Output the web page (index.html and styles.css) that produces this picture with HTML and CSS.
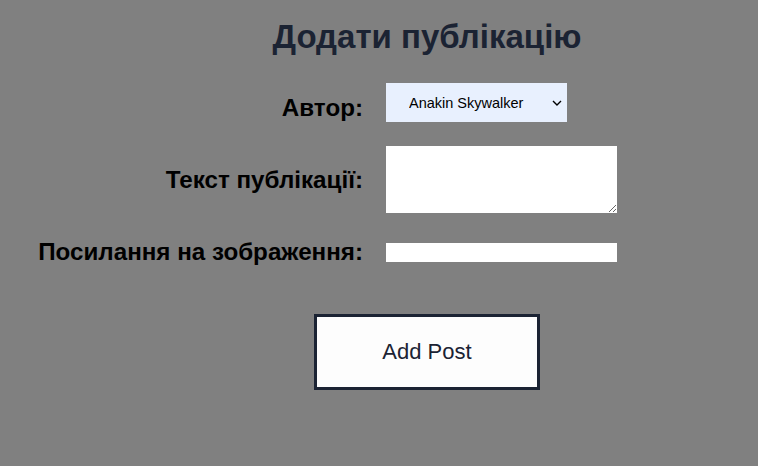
FILE: index.html
```html
<!DOCTYPE html>
<html lang="uk">
<head>
<meta charset="utf-8">
<title>Додати публікацію</title>
<link rel="stylesheet" href="styles.css">
</head>
<body>
<main class="page">
  <h1 class="title">Додати публікацію</h1>
  <form class="post-form">
    <div class="row row-author">
      <label class="label" for="author">Автор:</label>
      <div class="select-wrap">
        <select id="author" class="select">
          <option>Anakin Skywalker</option>
          <option>Luke Skywalker</option>
        </select>
        <svg class="chevron" width="10" height="6" viewBox="0 0 10 6" aria-hidden="true"><polyline points="1,1 5,5 9,1" fill="none" stroke="#000" stroke-width="1.4"/></svg>
      </div>
    </div>
    <div class="row row-text">
      <label class="label" for="text">Текст публікації:</label>
      <textarea id="text" class="textarea"></textarea>
    </div>
    <div class="row row-image">
      <label class="label" for="image">Посилання на зображення:</label>
      <input id="image" class="input" type="text">
    </div>
    <div class="actions">
      <button type="button" class="btn">Add Post</button>
    </div>
  </form>
</main>
</body>
</html>
```
FILE: styles.css
```css
html, body {
  margin: 0;
  padding: 0;
  background: #808080;
  font-family: "Liberation Sans", Arial, sans-serif;
}
.page {
  width: 758px;
  height: 466px;
  padding-top: 1px;
  box-sizing: border-box;
}
.title {
  margin: 16px 0 0 0;
  padding-left: 96px;
  text-align: center;
  font-size: 33px;
  font-weight: bold;
  color: #1b2333;
  line-height: 40px;
}
.post-form {
  display: flex;
  flex-direction: column;
  margin-top: 26px;
}
.row {
  display: grid;
  grid-template-columns: 355px 231px;
  column-gap: 23px;
  align-items: center;
  padding-left: 8px;
}
.row-text { margin-top: 24px; }
.row-image { margin-top: 26px; }
.label {
  text-align: right;
  font-size: 24.2px;
  font-weight: bold;
  color: #000;
  line-height: 26px;
}
.row-author .label { position: relative; top: 5px; }
.select-wrap {
  position: relative;
  width: 181px;
  height: 39px;
}
.select {
  -webkit-appearance: none;
  appearance: none;
  width: 181px;
  height: 39px;
  border: none;
  background: #e8f0fe;
  font-family: "Liberation Sans", Arial, sans-serif;
  font-size: 14.5px;
  color: #000;
  padding: 0 24px 0 23px;
  border-radius: 0;
  outline: none;
  display: block;
  margin: 0;
}
.chevron {
  position: absolute;
  left: 166px;
  top: 17px;
  pointer-events: none;
}
.textarea {
  width: 231px;
  height: 67px;
  border: none;
  background: #fff;
  padding: 2px;
  box-sizing: border-box;
  display: block;
  margin: 0;
  border-radius: 0;
}
.input {
  width: 231px;
  height: 19px;
  border: none;
  background: #fff;
  padding: 0 2px;
  box-sizing: border-box;
  display: block;
  margin: 0;
  border-radius: 0;
}
.actions {
  display: flex;
  padding-left: 96px;
  justify-content: center;
  margin-top: 49px;
}
.btn {
  width: 226px;
  height: 76px;
  border: 3px solid #1b2333;
  background: #fdfdfd;
  color: #1b2333;
  font-family: "Liberation Sans", Arial, sans-serif;
  font-size: 22px;
  border-radius: 0;
  box-sizing: border-box;
  cursor: pointer;
}
```
